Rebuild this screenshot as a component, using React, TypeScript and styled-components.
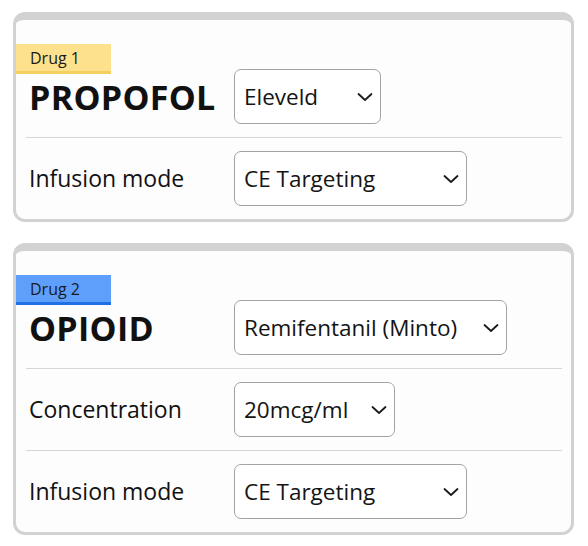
import React from "react";
import styled, { createGlobalStyle } from "styled-components";

const GlobalStyle = createGlobalStyle`
  html, body { margin: 0; padding: 0; background: #ffffff; }
  body { font-family: "Open Sans", "Noto Sans", sans-serif; color: #111; }
  * { box-sizing: border-box; }
`;

const Page = styled.div`
  display: flex;
  flex-direction: column;
  gap: 21px;
  padding: 12px 14px 0 13px;
`;

const Card = styled.section`
  position: relative;
  background: #fdfdfd;
  border: 3px solid #d2d2d2;
  border-top-width: 8px;
  border-radius: 12px;
  padding: 36px 9px 0 10px;
`;

const Badge = styled.div<{ $tone: "yellow" | "blue" }>`
  position: absolute;
  left: 0;
  top: 24px;
  width: 95px;
  height: 30px;
  padding-left: 14px;
  display: flex;
  align-items: center;
  font-size: 16px;
  line-height: 1;
  color: #1a1a1a;
  background: ${(p) => (p.$tone === "yellow" ? "#fde18c" : "#5e9ffc")};
  border-bottom: 3px solid ${(p) => (p.$tone === "yellow" ? "#f6cf5c" : "#1f6fe6")};
`;

const Row = styled.div<{ $last?: boolean }>`
  display: grid;
  grid-template-columns: 205px auto;
  justify-content: start;
  align-items: center;
  height: ${(p) => (p.$last ? "81px" : "82px")};
  padding: 0 0 0 3px;
  border-bottom: ${(p) => (p.$last ? "none" : "1.5px solid #d6d6d6")};
`;

const Title = styled.h2`
  margin: 0;
  font-size: 34px;
  font-weight: 700;
  letter-spacing: 0.3px;
  line-height: 1;
`;

const Label = styled.span`
  font-size: 23px;
  line-height: 1;
`;

const SelectWrap = styled.div<{ $w: number }>`
  position: relative;
  width: ${(p) => p.$w}px;
  height: 55px;
`;

const NativeSelect = styled.select`
  appearance: none;
  -webkit-appearance: none;
  width: 100%;
  height: 100%;
  padding: 0 32px 0 9px;
  font-family: "Open Sans", "Noto Sans", sans-serif;
  font-size: 22.5px;
  color: #141414;
  background: #ffffff;
  border: 1.5px solid #a3a3a3;
  border-radius: 7px;
  outline: none;
`;

const Chevron = styled.svg`
  position: absolute;
  right: 8px;
  top: 50%;
  transform: translateY(-50%);
  width: 16px;
  height: 9px;
  pointer-events: none;
`;

type Field = { label?: string; title?: string; value: string; w: number };

const Select = ({ value, w }: { value: string; w: number }) => (
  <SelectWrap $w={w}>
    <NativeSelect defaultValue={value}>
      <option value={value}>{value}</option>
    </NativeSelect>
    <Chevron viewBox="0 0 16 9" fill="none">
      <path d="M1.5 1.5 L8 7.5 L14.5 1.5" stroke="#1a1a1a" strokeWidth="1.8" strokeLinecap="round" strokeLinejoin="round" />
    </Chevron>
  </SelectWrap>
);

const DrugCard = ({ badge, tone, fields }: { badge: string; tone: "yellow" | "blue"; fields: Field[] }) => (
  <Card>
    <Badge $tone={tone}>{badge}</Badge>
    {fields.map((f, i) => (
      <Row key={i} $last={i === fields.length - 1}>
        {f.title ? <Title>{f.title}</Title> : <Label>{f.label}</Label>}
        <Select value={f.value} w={f.w} />
      </Row>
    ))}
  </Card>
);

export default function App() {
  return (
    <>
      <GlobalStyle />
      <Page>
        <DrugCard
          badge="Drug 1"
          tone="yellow"
          fields={[
            { title: "PROPOFOL", value: "Eleveld", w: 147 },
            { label: "Infusion mode", value: "CE Targeting", w: 233 },
          ]}
        />
        <DrugCard
          badge="Drug 2"
          tone="blue"
          fields={[
            { title: "OPIOID", value: "Remifentanil (Minto)", w: 273 },
            { label: "Concentration", value: "20mcg/ml", w: 161 },
            { label: "Infusion mode", value: "CE Targeting", w: 233 },
          ]}
        />
      </Page>
    </>
  );
}
